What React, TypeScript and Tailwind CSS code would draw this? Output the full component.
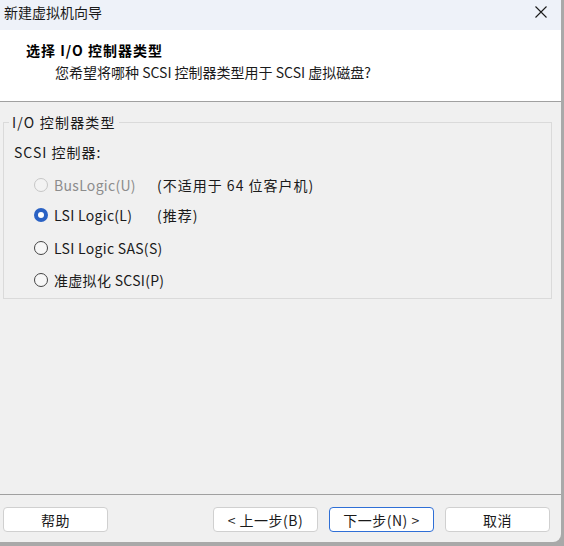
import React, { useState } from 'react';

const font = { fontFamily: '"Noto Sans CJK SC", "Noto Sans", sans-serif' };

type Option = { id: string; label: string; note?: string; disabled?: boolean };

const options: Option[] = [
  { id: 'buslogic', label: 'BusLogic(U)', note: '(不适用于 64 位客户机)', disabled: true },
  { id: 'lsi', label: 'LSI Logic(L)', note: '(推荐)' },
  { id: 'sas', label: 'LSI Logic SAS(S)' },
  { id: 'pvscsi', label: '准虚拟化 SCSI(P)' },
];

const Radio: React.FC<{ checked: boolean; disabled?: boolean }> = ({ checked, disabled }) => {
  if (checked) {
    return (
      <span className="shrink-0 w-[14px] h-[14px] rounded-full bg-[#2a62c4] flex items-center justify-center">
        <span className="w-[6px] h-[6px] rounded-full bg-white" />
      </span>
    );
  }
  return (
    <span
      className={
        disabled
          ? 'shrink-0 w-[14px] h-[14px] rounded-full border border-[#c6c6c6] bg-[#f3f3f3]'
          : 'shrink-0 w-[14px] h-[14px] rounded-full border border-[#444] bg-[#f7f7f7]'
      }
    />
  );
};

const Button: React.FC<{ label: string; primary?: boolean }> = ({ label, primary }) => (
  <button
    className={
      primary
        ? 'w-[105px] h-[25px] rounded-[4px] bg-white border border-[#2f6fd6] text-[14px] tracking-[0.5px] text-[#1a1a1a] leading-none'
        : 'w-[105px] h-[25px] rounded-[4px] bg-white border border-[#d0d0d0] text-[14px] tracking-[0.5px] text-[#1a1a1a] leading-none'
    }
  >
    {label}
  </button>
);

const App: React.FC = () => {
  const [selected, setSelected] = useState('lsi');

  const rowMargins = ['mt-[8px]', 'mt-0', 'mt-[3px]', 'mt-[2px]'];

  return (
    <div className="w-[564px] h-[546px] bg-[#a9a9a9] overflow-hidden" style={font}>
      <div className="w-[561px] h-[542px] bg-[#f0f0f0] rounded-br-[8px] flex flex-col overflow-hidden text-[#1a1a1a]">
        {/* Title bar */}
        <div className="h-[30px] bg-[#eef2f9] flex items-center justify-between pl-[4px] pr-[14px]">
          <span className="text-[14px] leading-[20px] -mt-[6px]">新建虚拟机向导</span>
          <svg width="12" height="12" viewBox="0 0 12 12" className="-mt-[6px]">
            <path d="M0.5 0.5 L11.5 11.5 M11.5 0.5 L0.5 11.5" stroke="#1a1a1a" strokeWidth="1.1" />
          </svg>
        </div>

        {/* Header */}
        <div className="h-[72px] bg-white border-b border-[#a0a0a0] pt-[10px]">
          <div className="pl-[26px] text-[14px] leading-[20px] font-bold tracking-[1px] text-black">选择 I/O 控制器类型</div>
          <div className="pl-[55px] mt-[2px] text-[14px] leading-[20px]">
            您希望将哪种 SCSI 控制器类型用于 SCSI 虚拟磁盘?
          </div>
        </div>

        {/* Body */}
        <div className="flex-1 pt-[10px]">
          <fieldset className="ml-[3px] w-[549px] border border-[#dadada] pb-[3px]">
            <legend className="ml-[5px] px-[3px] text-[14px] leading-[20px] tracking-[1.2px]">I/O 控制器类型</legend>
            <div className="mt-[10px] pl-[10px] text-[14px] leading-[20px] tracking-[1px]">SCSI 控制器:</div>
            {options.map((o, i) => (
              <div
                key={o.id}
                className={`${rowMargins[i]} h-[30px] flex items-center pl-[30px] text-[14px] whitespace-nowrap`}
                onClick={() => !o.disabled && setSelected(o.id)}
              >
                <Radio checked={selected === o.id} disabled={o.disabled} />
                <span
                  className={
                    o.disabled
                      ? 'ml-[6px] min-w-[103px] tracking-[0.3px] text-[#8c8c8c]'
                      : 'ml-[6px] min-w-[103px] tracking-[0.3px]'
                  }
                >
                  {o.label}
                </span>
                {o.note && <span className="tracking-[1px]">{o.note}</span>}
              </div>
            ))}
          </fieldset>
        </div>

        {/* Footer */}
        <div className="border-t border-[#a0a0a0] pt-[12px] pb-[10px] pl-[3px] pr-[11px] flex justify-between">
          <Button label="帮助" />
          <div className="flex gap-[11px]">
            <Button label="< 上一步(B)" />
            <Button label="下一步(N) >" primary />
            <Button label="取消" />
          </div>
        </div>
      </div>
    </div>
  );
};

export default App;
